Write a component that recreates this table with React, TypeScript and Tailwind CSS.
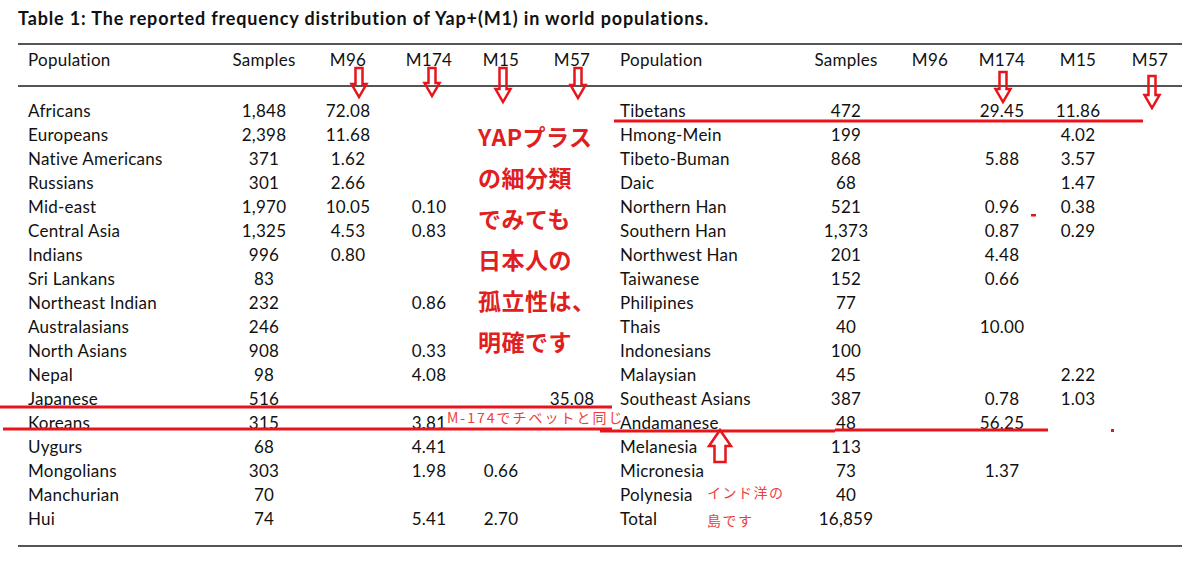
import React from "react";

type Row = [string, string, string, string, string, string];

const left: Row[] = [
  ["Africans", "1,848", "72.08", "", "", ""],
  ["Europeans", "2,398", "11.68", "", "", ""],
  ["Native Americans", "371", "1.62", "", "", ""],
  ["Russians", "301", "2.66", "", "", ""],
  ["Mid-east", "1,970", "10.05", "0.10", "", ""],
  ["Central Asia", "1,325", "4.53", "0.83", "", ""],
  ["Indians", "996", "0.80", "", "", ""],
  ["Sri Lankans", "83", "", "", "", ""],
  ["Northeast Indian", "232", "", "0.86", "", ""],
  ["Australasians", "246", "", "", "", ""],
  ["North Asians", "908", "", "0.33", "", ""],
  ["Nepal", "98", "", "4.08", "", ""],
  ["Japanese", "516", "", "", "", "35.08"],
  ["Koreans", "315", "", "3.81", "", ""],
  ["Uygurs", "68", "", "4.41", "", ""],
  ["Mongolians", "303", "", "1.98", "0.66", ""],
  ["Manchurian", "70", "", "", "", ""],
  ["Hui", "74", "", "5.41", "2.70", ""],
];

const right: Row[] = [
  ["Tibetans", "472", "", "29.45", "11.86", ""],
  ["Hmong-Mein", "199", "", "", "4.02", ""],
  ["Tibeto-Buman", "868", "", "5.88", "3.57", ""],
  ["Daic", "68", "", "", "1.47", ""],
  ["Northern Han", "521", "", "0.96", "0.38", ""],
  ["Southern Han", "1,373", "", "0.87", "0.29", ""],
  ["Northwest Han", "201", "", "4.48", "", ""],
  ["Taiwanese", "152", "", "0.66", "", ""],
  ["Philipines", "77", "", "", "", ""],
  ["Thais", "40", "", "10.00", "", ""],
  ["Indonesians", "100", "", "", "", ""],
  ["Malaysian", "45", "", "", "2.22", ""],
  ["Southeast Asians", "387", "", "0.78", "1.03", ""],
  ["Andamanese", "48", "", "56.25", "", ""],
  ["Melanesia", "113", "", "", "", ""],
  ["Micronesia", "73", "", "1.37", "", ""],
  ["Polynesia", "40", "", "", "", ""],
  ["Total", "16,859", "", "", "", ""],
];

function LeftCells({ r }: { r: Row }) {
  return (
    <>
      <div className="w-[206px] pl-[10px] whitespace-nowrap">{r[0]}</div>
      <div className="w-[80px] text-center">{r[1]}</div>
      <div className="w-[88px] text-center">{r[2]}</div>
      <div className="w-[74px] text-center">{r[3]}</div>
      <div className="w-[70px] text-center">{r[4]}</div>
      <div className="w-[72px] text-center">{r[5]}</div>
    </>
  );
}

function RightCells({ r }: { r: Row }) {
  return (
    <>
      <div className="w-[198px] pl-[12px] whitespace-nowrap">{r[0]}</div>
      <div className="w-[80px] text-center">{r[1]}</div>
      <div className="w-[88px] text-center">{r[2]}</div>
      <div className="w-[56px] text-center">{r[3]}</div>
      <div className="w-[96px] text-center">{r[4]}</div>
      <div className="w-[48px] text-center">{r[5]}</div>
    </>
  );
}

function down(cx: number, y0: number, y1: number, sw = 3.5, hw = 7.5, hl = 13) {
  return `${cx - sw},${y0} ${cx + sw},${y0} ${cx + sw},${y1 - hl} ${cx + hw},${y1 - hl} ${cx},${y1} ${cx - hw},${y1 - hl} ${cx - sw},${y1 - hl}`;
}
function up(cx: number, y0: number, y1: number, sw = 5.5, hw = 11, hl = 16) {
  return `${cx},${y0} ${cx + hw},${y0 + hl} ${cx + sw},${y0 + hl} ${cx + sw},${y1} ${cx - sw},${y1} ${cx - sw},${y0 + hl} ${cx - hw},${y0 + hl}`;
}

const header: Row = ["Population", "Samples", "M96", "M174", "M15", "M57"];

export default function App() {
  return (
    <div className="relative w-[1204px] h-[568px] bg-white overflow-hidden text-[#111] font-[Lato,'Liberation_Sans',sans-serif]">
      <div className="pt-[7px] pl-[18px] text-[18px] leading-[22px] tracking-[0.85px] font-bold whitespace-nowrap">
        Table 1: The reported frequency distribution of Yap+(M1) in world populations.
      </div>
      <div className="ml-[18px] mt-[14px] w-[1164px] text-[17px] leading-[24px] tracking-[0.25px]">
        <div className="h-[2px] bg-[#555]" />
        <div className="flex pt-[3px] pb-[13px]">
          <LeftCells r={header} />
          <RightCells r={header} />
        </div>
        <div className="h-[2px] bg-[#555]" />
        <div className="flex flex-col pt-[12px] pb-[14px]">
          {left.map((r, i) => (
            <div key={i} className="flex h-[24px]">
              <LeftCells r={r} />
              <RightCells r={right[i]} />
            </div>
          ))}
        </div>
        <div className="h-[2px] bg-[#555]" />
      </div>

      <svg className="absolute left-0 top-0 pointer-events-none" width="1204" height="568">
        <g fill="none" stroke="#e8141c" strokeWidth="2.5" strokeLinejoin="miter">
          <polygon points={down(359, 68, 97)} />
          <polygon points={down(432, 68, 96)} />
          <polygon points={down(503, 68, 102)} />
          <polygon points={down(578, 68, 98)} />
          <polygon points={down(1003, 72, 102)} />
          <polygon points={down(1152, 76, 108)} />
          <polygon points={up(720, 430, 462)} />
        </g>
        <g stroke="#e8141c" strokeWidth="3">
          <line x1="614" y1="121" x2="1143" y2="121" />
          <line x1="0" y1="407" x2="612" y2="407" />
          <line x1="3" y1="429" x2="612" y2="429" />
          <line x1="600" y1="431" x2="835" y2="431" />
          <line x1="835" y1="430" x2="1048" y2="430" />
        </g>
        <rect x="1111" y="429" width="3" height="3" fill="#e8141c" />
        <rect x="1031" y="214" width="5" height="2.5" fill="#e8141c" />
      </svg>

      <div className="absolute left-[478px] top-[116px] text-[23px] leading-[41px] tracking-[0.5px] font-bold text-[#e0201e] font-['Noto_Sans_CJK_JP',sans-serif]">
        <div>YAPプラス</div>
        <div>の細分類</div>
        <div>でみても</div>
        <div>日本人の</div>
        <div>孤立性は、</div>
        <div>明確です</div>
      </div>

      <div className="absolute left-[447px] top-[408px] text-[14px] leading-[18px] tracking-[2px] text-[#f03c3c] whitespace-nowrap font-['Noto_Sans_CJK_JP',sans-serif]">
        M-174でチベットと同じ
      </div>

      <div className="absolute left-[707px] top-[478px] text-[14px] leading-[28px] tracking-[1.5px] text-[#f03c3c] font-['Noto_Sans_CJK_JP',sans-serif]">
        <div>インド洋の</div>
        <div>島です</div>
      </div>
    </div>
  );
}
